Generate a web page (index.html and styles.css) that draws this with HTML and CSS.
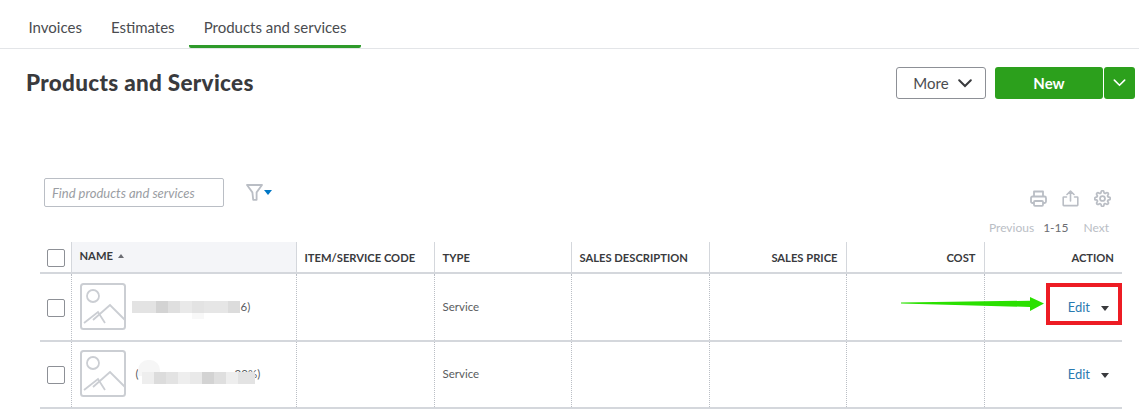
FILE: index.html
```html
<!DOCTYPE html>
<html lang="en">
<head>
<meta charset="utf-8">
<title>Products and Services</title>
<link rel="stylesheet" href="styles.css">
</head>
<body>
<div class="page">
  <nav class="tabs">
    <a class="tab">Invoices</a>
    <a class="tab">Estimates</a>
    <a class="tab active">Products and services</a>
  </nav>
  <header class="head">
    <h1>Products and Services</h1>
    <div class="actions">
      <button class="btn more">More
        <svg class="chev" viewBox="0 0 14 9" width="14" height="9"><path d="M1.2 1.2 7 7l5.8-5.8" fill="none" stroke="#393a3d" stroke-width="2" stroke-linecap="round"/></svg>
      </button>
      <button class="btn new">New</button>
      <button class="btn new-split">
        <svg viewBox="0 0 14 9" width="13" height="8"><path d="M1.2 1.2 7 7l5.8-5.8" fill="none" stroke="#fff" stroke-width="1.8" stroke-linecap="round"/></svg>
      </button>
    </div>
  </header>
  <section class="toolbar">
    <div class="search">Find products and services</div>
    <div class="filter">
      <svg viewBox="0 0 17 17" width="17" height="17"><path d="M1 1h15l-5.4 7.4V15.8H7.2L6.4 8.4z" fill="none" stroke="#babec5" stroke-width="1.8" stroke-linejoin="round"/></svg>
      <span class="caret blue"></span>
    </div>
    <div class="tools">
      <div class="tool-icons">
        <svg viewBox="0 0 17 17" width="17" height="17"><g fill="none" stroke="#babec5" stroke-width="1.8" stroke-linejoin="round"><path d="M4 6.5V1.5h9v5"/><path d="M4 13H2.5A1.5 1.5 0 0 1 1 11.500V8a1.500 1.500 0 0 1 1.500-1.500h12A1.500 1.500 0 0 1 16 8v3.500a1.500 1.500 0 0 1-1.500 1.500H13"/><rect x="4" y="11" width="9" height="4.800" rx="1"/></g></svg>
        <svg viewBox="0 0 17 17" width="17" height="17"><g fill="none" stroke="#babec5" stroke-width="1.6" stroke-linecap="round" stroke-linejoin="round"><path d="M8.500 11V1.200M5 4.500l3.500-3.400L12 4.500"/><path d="M4.500 7H1.800a.6.6 0 0 0-.6.6v7.400a.6.6 0 0 0 .6.6h13.400a.6.6 0 0 0 .6-.6V7.600a.6.6 0 0 0-.6-.6h-2.700"/></g></svg>
        <svg viewBox="0 0 24 24" width="17" height="17"><g fill="none" stroke="#babec5" stroke-width="2.500" stroke-linecap="round" stroke-linejoin="round"><circle cx="12" cy="12" r="3.500"/><path d="M19.400 15a1.650 1.650 0 0 0 .33 1.820l.06.06a2 2 0 0 1 0 2.830 2 2 0 0 1-2.830 0l-.06-.06a1.650 1.650 0 0 0-1.820-.33 1.650 1.650 0 0 0-1 1.510V21a2 2 0 0 1-2 2 2 2 0 0 1-2-2v-.09A1.650 1.650 0 0 0 9 19.400a1.650 1.650 0 0 0-1.820.33l-.06.06a2 2 0 0 1-2.830 0 2 2 0 0 1 0-2.830l.06-.06a1.650 1.650 0 0 0 .33-1.820 1.650 1.650 0 0 0-1.510-1H3a2 2 0 0 1-2-2 2 2 0 0 1 2-2h.09A1.650 1.650 0 0 0 4.600 9a1.650 1.650 0 0 0-.33-1.820l-.06-.06a2 2 0 0 1 0-2.830 2 2 0 0 1 2.830 0l.06.06a1.650 1.650 0 0 0 1.820.33H9a1.650 1.650 0 0 0 1-1.510V3a2 2 0 0 1 2-2 2 2 0 0 1 2 2v.09a1.650 1.650 0 0 0 1 1.510 1.650 1.650 0 0 0 1.820-.33l.06-.06a2 2 0 0 1 2.830 0 2 2 0 0 1 0 2.830l-.06.06a1.650 1.650 0 0 0-.33 1.820V9a1.650 1.650 0 0 0 1.510 1H21a2 2 0 0 1 2 2 2 2 0 0 1-2 2h-.09a1.650 1.650 0 0 0-1.510 1z"/></g></svg>
      </div>
      <div class="pager"><span class="off">Previous</span><span class="range">1-15</span><span class="off next">Next</span></div>
    </div>
  </section>
  <table class="grid">
    <colgroup>
      <col class="c-check"><col class="c-name"><col class="c-a"><col class="c-b"><col class="c-a"><col class="c-b"><col class="c-a"><col class="c-a">
    </colgroup>
    <thead>
      <tr>
        <th class="check"><span class="box"></span></th>
        <th class="sorted">NAME <span class="sort"></span></th>
        <th>ITEM/SERVICE CODE</th>
        <th>TYPE</th>
        <th>SALES DESCRIPTION</th>
        <th class="num">SALES PRICE</th>
        <th class="num">COST</th>
        <th class="num">ACTION</th>
      </tr>
    </thead>
    <tbody>
      <tr>
        <td class="check"><span class="box"></span></td>
        <td>
          <div class="item">
            <svg class="thumb" viewBox="0 0 46 47" width="46" height="47"><g fill="none" stroke="#cbced3" stroke-width="1.800"><rect x="1" y="1" width="44" height="45" rx="2.500" stroke-width="2"/><circle cx="13" cy="13" r="6"/><path d="M4 40l14-11 7 11"/><path d="M13 37l17-15 15 15"/></g></svg>
            <span class="blur one"><i class="s4"></i><i class="s4"></i><i class="s1"></i><i class="s3"></i><i class="s6"></i><i class="s4"></i><i class="s5"></i><i class="s5"></i><i class="s2"></i></span><span class="frag">6)</span>
          </div>
        </td>
        <td></td>
        <td>Service</td>
        <td></td><td></td><td></td>
        <td class="act"><a>Edit</a><span class="caret dark"></span></td>
      </tr>
      <tr>
        <td class="check"><span class="box"></span></td>
        <td>
          <div class="item">
            <svg class="thumb" viewBox="0 0 46 47" width="46" height="47"><g fill="none" stroke="#cbced3" stroke-width="1.800"><rect x="1" y="1" width="44" height="45" rx="2.500" stroke-width="2"/><circle cx="13" cy="13" r="6"/><path d="M4 40l14-11 7 11"/><path d="M13 37l17-15 15 15"/></g></svg>
            <span class="frag lead">(</span><span class="blur two"><i class="s7"></i><i class="s2"></i><i class="s4"></i><i class="s7"></i><i class="s6"></i><i class="s1"></i><i class="s3"></i><i class="s7"></i><i class="s4 wide"></i></span><span class="frag tail">20%)</span>
          </div>
        </td>
        <td></td>
        <td>Service</td>
        <td></td><td></td><td></td>
        <td class="act"><a>Edit</a><span class="caret dark"></span></td>
      </tr>
    </tbody>
  </table>
  <svg class="arrow" viewBox="0 0 144 16" width="144" height="16"><path d="M0 6.500 129 4.700V1l14 6.500L129 15v-4L0 7.500z" fill="#2ae000"/></svg>
  <div class="redbox"></div>
</div>
</body>
</html>
```
FILE: styles.css
```css
* { box-sizing: border-box; }
html, body { margin: 0; padding: 0; background: #fff; }
body { font-family: Lato, "Open Sans", sans-serif; color: #393a3d; overflow: hidden; }
.page { position: relative; width: 1139px; height: 409px; overflow: hidden; }

.tabs { display: flex; height: 49px; padding-left: 14px; border-bottom: 1px solid #e3e5e8; }
.tab { height: 47px; padding: 18px 14.5px 0; font-size: 15px; line-height: 18px; color: #4a4c50; }
.tab.active { border-bottom: 3px solid #2e9a2a; border-radius: 0 0 2px 2px; height: 48px; }

.head { display: flex; justify-content: space-between; align-items: center; height: 32px; margin-top: 18px; padding: 0 4px 0 26px; }
h1 { margin: 0; font-size: 22.5px; line-height: 32px; font-weight: 900; letter-spacing: 0.3px; color: #393a3d; }
.actions { display: flex; }
.btn { height: 32px; border-radius: 3px; font-family: inherit; font-size: 15px; padding: 0; display: flex; align-items: center; justify-content: center; }
.more { width: 90px; background: #fff; border: 1px solid #8d9096; color: #4a4c50; gap: 9px; margin-right: 9px; padding-left: 3px; }
.new { width: 108px; background: #2ca01c; border: 0; color: #fff; font-weight: 700; margin-right: 1px; }
.new-split { width: 31px; background: #2ca01c; border: 0; }

.toolbar { display: flex; margin: 79px 28px 0 44px; height: 64px; align-items: flex-start; }
.search { width: 180px; height: 29px; border: 1px solid #babec5; border-radius: 2px; padding: 1px 7px 0; font-size: 13px; line-height: 27px; font-style: italic; color: #9a9da3; }
.filter { display: flex; align-items: center; gap: 1px; margin: 6px 0 0 22px; }
.caret { display: inline-block; width: 0; height: 0; border-left: 4px solid transparent; border-right: 4px solid transparent; border-top: 5px solid #0077c5; }
.tools { margin-left: auto; display: flex; flex-direction: column; align-items: flex-end; padding-top: 12px; }
.tool-icons { display: flex; gap: 15px; height: 17px; }
.pager { display: flex; margin-top: 13px; font-size: 12px; line-height: 16px; padding-right: 2px; }
.off { color: #babec5; }
.range { color: #6b6c72; font-size: 12px; margin-left: 9px; }
.next { margin-left: 15px; }

.grid { margin-left: 40px; width: 1082px; table-layout: fixed; border-collapse: collapse; font-size: 12px; }
.c-check { width: 31px; } .c-name { width: 225px; } .c-a { width: 138px; } .c-b { width: 137px; }
th { height: 31px; padding: 1px 8px 0; text-align: left; font-size: 11.2px; font-weight: 700; color: #393a3d; border-left: 1px solid #d4d7dc; border-bottom: 2px solid #d4d7dc; white-space: nowrap; }
th.check { border-left: 0; padding: 1px 0 0 7px; }
td.check { border-left: 0; padding: 0 0 0 7px; }
th.sorted { background: #f4f5f8; padding-bottom: 4px; }
th.num { text-align: right; }
.sort { display: inline-block; vertical-align: 2px; margin-left: 2px; width: 0; height: 0; border-left: 3.5px solid transparent; border-right: 3.5px solid transparent; border-bottom: 4px solid #6b6c72; }
td { height: 67px; padding: 0 8px 2px; border-left: 1px dotted #babec5; border-bottom: 2px solid #d4d7dc; font-size: 11.5px; color: #5a5c60; }
tbody tr:first-child td { height: 68px; padding-top: 1px; }
td.check { padding-bottom: 0; }
.box { display: block; width: 18px; height: 18px; border: 1px solid #8d9096; border-radius: 2px; background: #fff; }
.item { display: flex; align-items: center; font-size: 11.5px; position: relative; z-index: 0; }
.thumb { flex: none; margin-right: 6px; }
.blur { display: flex; position: relative; height: 12px; filter: blur(0.5px); }
.blur i { display: block; width: 12px; height: 12px; }
.blur i.wide { width: 17px; }
.s1 { background: #d3d3d3; }
.s2 { background: #dcdcdc; }
.s3 { background: #dfdfdf; }
.s4 { background: #e3e3e3; }
.s5 { background: #e6e6e6; }
.s6 { background: #e9e9e9; }
.s7 { background: #eeeeee; }
.blur.one::after { content: ""; position: absolute; left: 60px; top: 12px; width: 12px; height: 6px; background: #f8f8f8; }
.blur.two { margin: 8px 0 0 3px; }
.blur.two::before { content: ""; position: absolute; left: -4px; top: -12px; width: 22px; height: 16px; border-radius: 10px 10px 0 0; background: #f6f6f6; z-index: -1; }
.frag { margin-left: 1px; }
.lead { margin-left: 4px; }
.tail { margin-left: -20px; position: relative; z-index: -1; }
.act { text-align: right; padding-right: 12px; white-space: nowrap; }
.act a { color: #2a7ab0; font-size: 13px; }
.caret.dark { border-top-color: #393a3d; margin-left: 11px; vertical-align: 1px; margin-right: 1px; }

.arrow { position: absolute; left: 901px; top: 296px; }
.redbox { position: absolute; left: 1046px; top: 283px; width: 76px; height: 42px; border: 4px solid #ed1c24; }
```
